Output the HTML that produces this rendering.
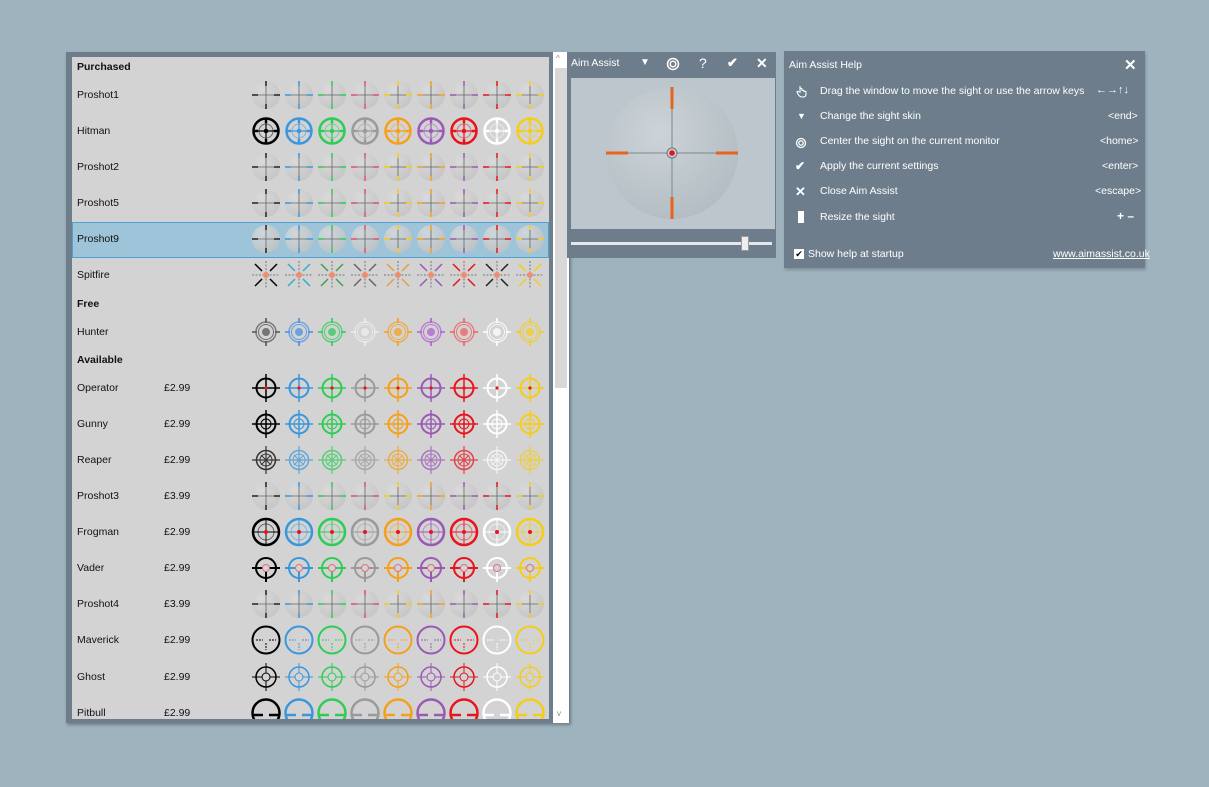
<!DOCTYPE html>
<html><head><meta charset="utf-8"><style>
body{margin:0;width:1209px;height:787px;background:#9fb3bf;font-family:"Liberation Sans",sans-serif;position:relative;overflow:hidden}
.a{position:absolute}
.t{font-size:10.5px;color:#111}
.b{font-weight:bold}
.w{color:#fff;font-size:10.5px}
</style></head><body>
<div class="a" style="left:66px;top:52px;width:504px;height:671px;background:#6e7d8c;box-shadow:1px 2px 3px rgba(0,0,0,.3)"></div>
<div class="a" style="left:72px;top:57px;width:477px;height:662px;background:#d3d3d3;overflow:hidden">
<div class="a" style="left:0;top:165px;width:475px;height:34px;background:#9dc4d9;border:1px solid #4fa1d2"></div>
</div>
<div class="a" style="left:553px;top:52px;width:16px;height:671px;background:#fff"></div>
<div class="a" style="left:555px;top:68px;width:12px;height:320px;background:#d8d8d8"></div>
<div class="a t" style="left:556px;top:54px;font-size:8px;color:#888">^</div>
<div class="a t" style="left:557px;top:709px;font-size:8px;color:#888">v</div>
<div class="a t b" style="left:77px;top:61px">Purchased</div>
<div class="a t" style="left:77px;top:89px">Proshot1</div>
<div class="a t" style="left:77px;top:125px">Hitman</div>
<div class="a t" style="left:77px;top:161px">Proshot2</div>
<div class="a t" style="left:77px;top:197px">Proshot5</div>
<div class="a t" style="left:77px;top:233px">Proshot9</div>
<div class="a t" style="left:77px;top:269px">Spitfire</div>
<div class="a t b" style="left:77px;top:298px">Free</div>
<div class="a t" style="left:77px;top:326px">Hunter</div>
<div class="a t b" style="left:77px;top:354px">Available</div>
<div class="a t" style="left:77px;top:382px">Operator</div><div class="a t" style="left:164px;top:382px">£2.99</div>
<div class="a t" style="left:77px;top:418px">Gunny</div><div class="a t" style="left:164px;top:418px">£2.99</div>
<div class="a t" style="left:77px;top:454px">Reaper</div><div class="a t" style="left:164px;top:454px">£2.99</div>
<div class="a t" style="left:77px;top:490px">Proshot3</div><div class="a t" style="left:164px;top:490px">£3.99</div>
<div class="a t" style="left:77px;top:526px">Frogman</div><div class="a t" style="left:164px;top:526px">£2.99</div>
<div class="a t" style="left:77px;top:562px">Vader</div><div class="a t" style="left:164px;top:562px">£2.99</div>
<div class="a t" style="left:77px;top:598px">Proshot4</div><div class="a t" style="left:164px;top:598px">£3.99</div>
<div class="a t" style="left:77px;top:634px">Maverick</div><div class="a t" style="left:164px;top:634px">£2.99</div>
<div class="a t" style="left:77px;top:671px">Ghost</div><div class="a t" style="left:164px;top:671px">£2.99</div>
<div class="a t" style="left:77px;top:707px">Pitbull</div><div class="a t" style="left:164px;top:707px">£2.99</div>

<svg class="a" style="left:0;top:0" width="560" height="719" viewBox="0 0 560 719">
<defs>
<radialGradient id="fg" cx=".35" cy=".3" r=".75"><stop offset="0" stop-color="#dcdcdc"/><stop offset="1" stop-color="#c2c2c2"/></radialGradient>
<symbol id="f" viewBox="-16 -16 32 32" overflow="visible" fill="none"><circle r="14" fill="url(#fg)" opacity=".8"/><line x1="-14" x2="14" stroke="#666" stroke-width=".8"/><line y1="-14" y2="14" stroke="#666" stroke-width=".8"/><path d="M-14 0H-8M8 0H14M0 -14V-9M0 9V14" stroke="currentColor" stroke-width="1.5"/></symbol>
<symbol id="h" viewBox="-16 -16 32 32" overflow="visible" stroke="currentColor" fill="none"><circle r="12.5" stroke-width="2.5"/><circle r="7" stroke-width="1" opacity=".5"/><path d="M-13 0H13M0 -13V13" stroke-width="1.2"/><path d="M-13 0H-8M8 0H13M0 -13V-8M0 8V13" stroke-width="2.5"/><circle r="1.8" fill="currentColor"/></symbol>
<symbol id="s" viewBox="-16 -16 32 32" overflow="visible" fill="none"><path d="M-11 -11L-4 -4M11 11L4 4M11 -11L4 -4M-11 11L-4 4" stroke="currentColor" stroke-width="1.5"/><path d="M-14 0H14M0 -14V14" stroke="#777" stroke-width="1" stroke-dasharray="2 1.5"/><circle r="3" fill="#f08d70"/></symbol>
<symbol id="u" viewBox="-16 -16 32 32" overflow="visible" stroke="currentColor" fill="none"><circle r="10" stroke-width="1.5" opacity=".7"/><circle r="7.5" stroke-width="1" opacity=".8"/><path d="M-14 0H-9M9 0H14M0 -14V-9M0 9V14" stroke-width="1.6"/><circle r="4" fill="currentColor" stroke="none" opacity=".75"/></symbol>
<symbol id="o" viewBox="-16 -16 32 32" overflow="visible" stroke="currentColor" fill="none"><circle r="9.5" stroke-width="2"/><path d="M-14 0H14M0 -14V14" stroke-width="1.5"/><circle r="1.6" fill="#e8141c" stroke="none"/></symbol>
<symbol id="g" viewBox="-16 -16 32 32" overflow="visible" stroke="currentColor" fill="none"><circle r="9.5" stroke-width="2"/><circle r="5" stroke-width="1"/><path d="M-14 0H14M0 -14V14" stroke-width="1.5"/></symbol>
<symbol id="r" viewBox="-16 -16 32 32" overflow="visible" stroke="currentColor" fill="none" opacity=".75"><circle r="9.5" stroke-width="1.5"/><circle r="6" stroke-width="1"/><path d="M-14 0H14M0 -14V14" stroke-width="1.2"/><path d="M-5 -5L5 5M5 -5L-5 5" stroke-width="1"/></symbol>
<symbol id="fr" viewBox="-16 -16 32 32" overflow="visible" stroke="currentColor" fill="none"><circle r="13" stroke-width="2.5"/><circle r="8" stroke-width="1" opacity=".5"/><path d="M-13 0H13M0 -13V13" stroke-width=".9"/><circle r="2" fill="#e8141c" stroke="none"/></symbol>
<symbol id="v" viewBox="-16 -16 32 32" overflow="visible" stroke="currentColor" fill="none"><circle r="10" stroke-width="2"/><path d="M-14 0H-3M3 0H14M0 3V14" stroke-width="2"/><circle r="3.5" stroke="#e07080" stroke-width="1"/></symbol>
<symbol id="m" viewBox="-16 -16 32 32" overflow="visible" stroke="currentColor" fill="none"><circle r="13.5" stroke-width="2"/><path d="M-10 0H-3M3 0H10M0 3V10" stroke-width="1" stroke-dasharray="2 1"/></symbol>
<symbol id="gh" viewBox="-16 -16 32 32" overflow="visible" stroke="currentColor" fill="none"><circle r="10" stroke-width="1.5"/><circle r="4" stroke-width="1"/><path d="M-14 0H-4M4 0H14M0 -14V-4M0 4V14" stroke-width="1"/></symbol>
<symbol id="p" viewBox="-16 -16 32 32" overflow="visible" stroke="currentColor" fill="none"><circle r="13.5" stroke-width="2.5"/><path d="M-13 2H-3M3 2H13" stroke-width="2.5"/></symbol>
<g id="R_f"><use href="#f" x="250" y="-16" width="32" height="32" color="#222"/><use href="#f" x="283" y="-16" width="32" height="32" color="#3a97db"/><use href="#f" x="316" y="-16" width="32" height="32" color="#2ecc55"/><use href="#f" x="349" y="-16" width="32" height="32" color="#e05070"/><use href="#f" x="382" y="-16" width="32" height="32" color="#f5cc1a"/><use href="#f" x="415" y="-16" width="32" height="32" color="#f5a01a"/><use href="#f" x="448" y="-16" width="32" height="32" color="#9b59b6"/><use href="#f" x="481" y="-16" width="32" height="32" color="#e8141c"/><use href="#f" x="514" y="-16" width="32" height="32" color="#f5cc1a"/></g>
</defs>
<use href="#R_f" y="95"/><use href="#R_f" y="167"/><use href="#R_f" y="203"/><use href="#R_f" y="239"/><use href="#R_f" y="496"/><use href="#R_f" y="604"/>
<g transform="translate(0,115)"><use href="#h" x="250" width="32" height="32" color="#000"/><use href="#h" x="283" width="32" height="32" color="#3a97db"/><use href="#h" x="316" width="32" height="32" color="#2ecc55"/><use href="#h" x="349" width="32" height="32" color="#9a9a9a"/><use href="#h" x="382" width="32" height="32" color="#f5a01a"/><use href="#h" x="415" width="32" height="32" color="#9b59b6"/><use href="#h" x="448" width="32" height="32" color="#e8141c"/><use href="#h" x="481" width="32" height="32" color="#fff"/><use href="#h" x="514" width="32" height="32" color="#f5cc1a"/></g>
<g transform="translate(0,259)"><use href="#s" x="250" width="32" height="32" color="#000"/><use href="#s" x="283" width="32" height="32" color="#3aa8c8"/><use href="#s" x="316" width="32" height="32" color="#4a9a5a"/><use href="#s" x="349" width="32" height="32" color="#666"/><use href="#s" x="382" width="32" height="32" color="#e0a040"/><use href="#s" x="415" width="32" height="32" color="#9b59b6"/><use href="#s" x="448" width="32" height="32" color="#e8141c"/><use href="#s" x="481" width="32" height="32" color="#222"/><use href="#s" x="514" width="32" height="32" color="#f5cc1a"/></g>
<g transform="translate(0,316)"><use href="#u" x="250" width="32" height="32" color="#555"/><use href="#u" x="283" width="32" height="32" color="#4a90e0"/><use href="#u" x="316" width="32" height="32" color="#2ecc55"/><use href="#u" x="349" width="32" height="32" color="#eee"/><use href="#u" x="382" width="32" height="32" color="#f5a01a"/><use href="#u" x="415" width="32" height="32" color="#b060d0"/><use href="#u" x="448" width="32" height="32" color="#f06060"/><use href="#u" x="481" width="32" height="32" color="#fff"/><use href="#u" x="514" width="32" height="32" color="#f5cc1a"/></g>
<g transform="translate(0,372)"><use href="#o" x="250" width="32" height="32" color="#000"/><use href="#o" x="283" width="32" height="32" color="#3a97db"/><use href="#o" x="316" width="32" height="32" color="#2ecc55"/><use href="#o" x="349" width="32" height="32" color="#9a9a9a"/><use href="#o" x="382" width="32" height="32" color="#f5a01a"/><use href="#o" x="415" width="32" height="32" color="#9b59b6"/><use href="#o" x="448" width="32" height="32" color="#e8141c"/><use href="#o" x="481" width="32" height="32" color="#fff"/><use href="#o" x="514" width="32" height="32" color="#f5cc1a"/></g>
<g transform="translate(0,408)"><use href="#g" x="250" width="32" height="32" color="#000"/><use href="#g" x="283" width="32" height="32" color="#3a97db"/><use href="#g" x="316" width="32" height="32" color="#2ecc55"/><use href="#g" x="349" width="32" height="32" color="#9a9a9a"/><use href="#g" x="382" width="32" height="32" color="#f5a01a"/><use href="#g" x="415" width="32" height="32" color="#9b59b6"/><use href="#g" x="448" width="32" height="32" color="#e8141c"/><use href="#g" x="481" width="32" height="32" color="#fff"/><use href="#g" x="514" width="32" height="32" color="#f5cc1a"/></g>
<g transform="translate(0,444)"><use href="#r" x="250" width="32" height="32" color="#000"/><use href="#r" x="283" width="32" height="32" color="#3a97db"/><use href="#r" x="316" width="32" height="32" color="#2ecc55"/><use href="#r" x="349" width="32" height="32" color="#9a9a9a"/><use href="#r" x="382" width="32" height="32" color="#f5a01a"/><use href="#r" x="415" width="32" height="32" color="#9b59b6"/><use href="#r" x="448" width="32" height="32" color="#e8141c"/><use href="#r" x="481" width="32" height="32" color="#fff"/><use href="#r" x="514" width="32" height="32" color="#f5cc1a"/></g>
<g transform="translate(0,516)"><use href="#fr" x="250" width="32" height="32" color="#000"/><use href="#fr" x="283" width="32" height="32" color="#3a97db"/><use href="#fr" x="316" width="32" height="32" color="#2ecc55"/><use href="#fr" x="349" width="32" height="32" color="#9a9a9a"/><use href="#fr" x="382" width="32" height="32" color="#f5a01a"/><use href="#fr" x="415" width="32" height="32" color="#9b59b6"/><use href="#fr" x="448" width="32" height="32" color="#e8141c"/><use href="#fr" x="481" width="32" height="32" color="#fff"/><use href="#fr" x="514" width="32" height="32" color="#f5cc1a"/></g>
<g transform="translate(0,552)"><use href="#v" x="250" width="32" height="32" color="#000"/><use href="#v" x="283" width="32" height="32" color="#3a97db"/><use href="#v" x="316" width="32" height="32" color="#2ecc55"/><use href="#v" x="349" width="32" height="32" color="#9a9a9a"/><use href="#v" x="382" width="32" height="32" color="#f5a01a"/><use href="#v" x="415" width="32" height="32" color="#9b59b6"/><use href="#v" x="448" width="32" height="32" color="#e8141c"/><use href="#v" x="481" width="32" height="32" color="#fff"/><use href="#v" x="514" width="32" height="32" color="#f5cc1a"/></g>
<g transform="translate(0,624)"><use href="#m" x="250" width="32" height="32" color="#000"/><use href="#m" x="283" width="32" height="32" color="#3a97db"/><use href="#m" x="316" width="32" height="32" color="#2ecc55"/><use href="#m" x="349" width="32" height="32" color="#9a9a9a"/><use href="#m" x="382" width="32" height="32" color="#f5a01a"/><use href="#m" x="415" width="32" height="32" color="#9b59b6"/><use href="#m" x="448" width="32" height="32" color="#e8141c"/><use href="#m" x="481" width="32" height="32" color="#fff"/><use href="#m" x="514" width="32" height="32" color="#f5cc1a"/></g>
<g transform="translate(0,661)"><use href="#gh" x="250" width="32" height="32" color="#000"/><use href="#gh" x="283" width="32" height="32" color="#3a97db"/><use href="#gh" x="316" width="32" height="32" color="#2ecc55"/><use href="#gh" x="349" width="32" height="32" color="#9a9a9a"/><use href="#gh" x="382" width="32" height="32" color="#f5a01a"/><use href="#gh" x="415" width="32" height="32" color="#9b59b6"/><use href="#gh" x="448" width="32" height="32" color="#e8141c"/><use href="#gh" x="481" width="32" height="32" color="#fff"/><use href="#gh" x="514" width="32" height="32" color="#f5cc1a"/></g>
<g transform="translate(0,697)"><use href="#p" x="250" width="32" height="32" color="#000"/><use href="#p" x="283" width="32" height="32" color="#3a97db"/><use href="#p" x="316" width="32" height="32" color="#2ecc55"/><use href="#p" x="349" width="32" height="32" color="#9a9a9a"/><use href="#p" x="382" width="32" height="32" color="#f5a01a"/><use href="#p" x="415" width="32" height="32" color="#9b59b6"/><use href="#p" x="448" width="32" height="32" color="#e8141c"/><use href="#p" x="481" width="32" height="32" color="#fff"/><use href="#p" x="514" width="32" height="32" color="#f5cc1a"/></g>
</svg>

<div class="a" style="left:567px;top:52px;width:209px;height:206px;background:#6e7d8c"></div>
<div class="a w" style="left:571px;top:57px">Aim Assist</div>
<div class="a w" style="left:640px;top:57px;font-size:10px">▼</div>
<svg class="a" style="left:666px;top:57px" width="14" height="14"><circle cx="7" cy="7" r="5.5" fill="none" stroke="#fff" stroke-width="1.5"/><circle cx="7" cy="7" r="2.8" fill="none" stroke="#fff" stroke-width="1.5"/></svg>
<div class="a w" style="left:699px;top:55px;font-size:14px">?</div>
<div class="a w b" style="left:727px;top:55px;font-size:13px">✔</div>
<div class="a w b" style="left:756px;top:55px;font-size:14px">✕</div>
<svg class="a" style="left:571px;top:78px" width="204" height="151">
<defs><radialGradient id="rg" cx=".4" cy=".35" r=".7"><stop offset="0" stop-color="#cdd4d8"/><stop offset="1" stop-color="#b2bcc2"/></radialGradient></defs>
<rect width="204" height="151" fill="#bcc6cc"/>
<circle cx="101" cy="75" r="66" fill="url(#rg)"/>
<path d="M101 9V141M35 75H167" stroke="#7a8890" stroke-width="1"/>
<path d="M101 9V31M101 119V141M35 75H57M145 75H167" stroke="#e8641c" stroke-width="3"/>
<circle cx="101" cy="75" r="5" fill="#c8d0d4" stroke="#6a747a"/><circle cx="101" cy="75" r="2.8" fill="#e8141c"/>
</svg>
<div class="a" style="left:571px;top:242px;width:201px;height:3px;background:#e4e8ea"></div>
<div class="a" style="left:741px;top:236px;width:8px;height:15px;background:#eee;border:1px solid #999;box-sizing:border-box"></div>

<div class="a" style="left:784px;top:51px;width:361px;height:217px;background:#6e7d8c;box-shadow:1px 2px 3px rgba(0,0,0,.2)"></div>
<div class="a w" style="left:789px;top:59px">Aim Assist Help</div>
<div class="a w b" style="left:1124px;top:56px;font-size:15px">✕</div>
<svg class="a" style="left:796px;top:84px" width="12" height="14"><path d="M4 2v7M4 5c0-1 2-1 2 0v2c0-1 2-1 2 0v1c0-1 2-1 2 0v2c0 2-1 3-3 3H6c-2 0-3-1-4-3l-1-2c0-1 1-1 2 0" fill="none" stroke="#fff" stroke-width="1.1"/></svg>
<div class="a w" style="left:820px;top:85px">Drag the window to move the sight or use the arrow keys</div>
<div class="a w b" style="left:1096px;top:84px;font-size:11px">←→↑↓</div>
<div class="a w" style="left:797px;top:111px;font-size:9px">▼</div>
<div class="a w" style="left:820px;top:110px">Change the sight skin</div>
<div class="a w" style="left:1108px;top:110px">&lt;end&gt;</div>
<svg class="a" style="left:795px;top:137px" width="12" height="12"><circle cx="6" cy="6" r="4.5" fill="none" stroke="#fff" stroke-width="1.3"/><circle cx="6" cy="6" r="2.2" fill="none" stroke="#fff" stroke-width="1.3"/></svg>
<div class="a w" style="left:820px;top:135px">Center the sight on the current monitor</div>
<div class="a w" style="left:1100px;top:135px">&lt;home&gt;</div>
<div class="a w b" style="left:795px;top:159px;font-size:12px">✔</div>
<div class="a w" style="left:820px;top:160px">Apply the current settings</div>
<div class="a w" style="left:1102px;top:160px">&lt;enter&gt;</div>
<div class="a w b" style="left:795px;top:184px;font-size:13px">✕</div>
<div class="a w" style="left:820px;top:185px">Close Aim Assist</div>
<div class="a w" style="left:1095px;top:185px">&lt;escape&gt;</div>
<div class="a" style="left:798px;top:211px;width:6px;height:12px;background:#fff"></div>
<div class="a w" style="left:820px;top:211px">Resize the sight</div>
<div class="a w b" style="left:1117px;top:209px;font-size:12px">+ –</div>
<div class="a" style="left:794px;top:249px;width:10px;height:10px;background:#fff;font-size:9px;line-height:10px;text-align:center;color:#000">✔</div>
<div class="a w" style="left:808px;top:248px">Show help at startup</div>
<div class="a w" style="left:1053px;top:248px;text-decoration:underline">www.aimassist.co.uk</div>
</body></html>
